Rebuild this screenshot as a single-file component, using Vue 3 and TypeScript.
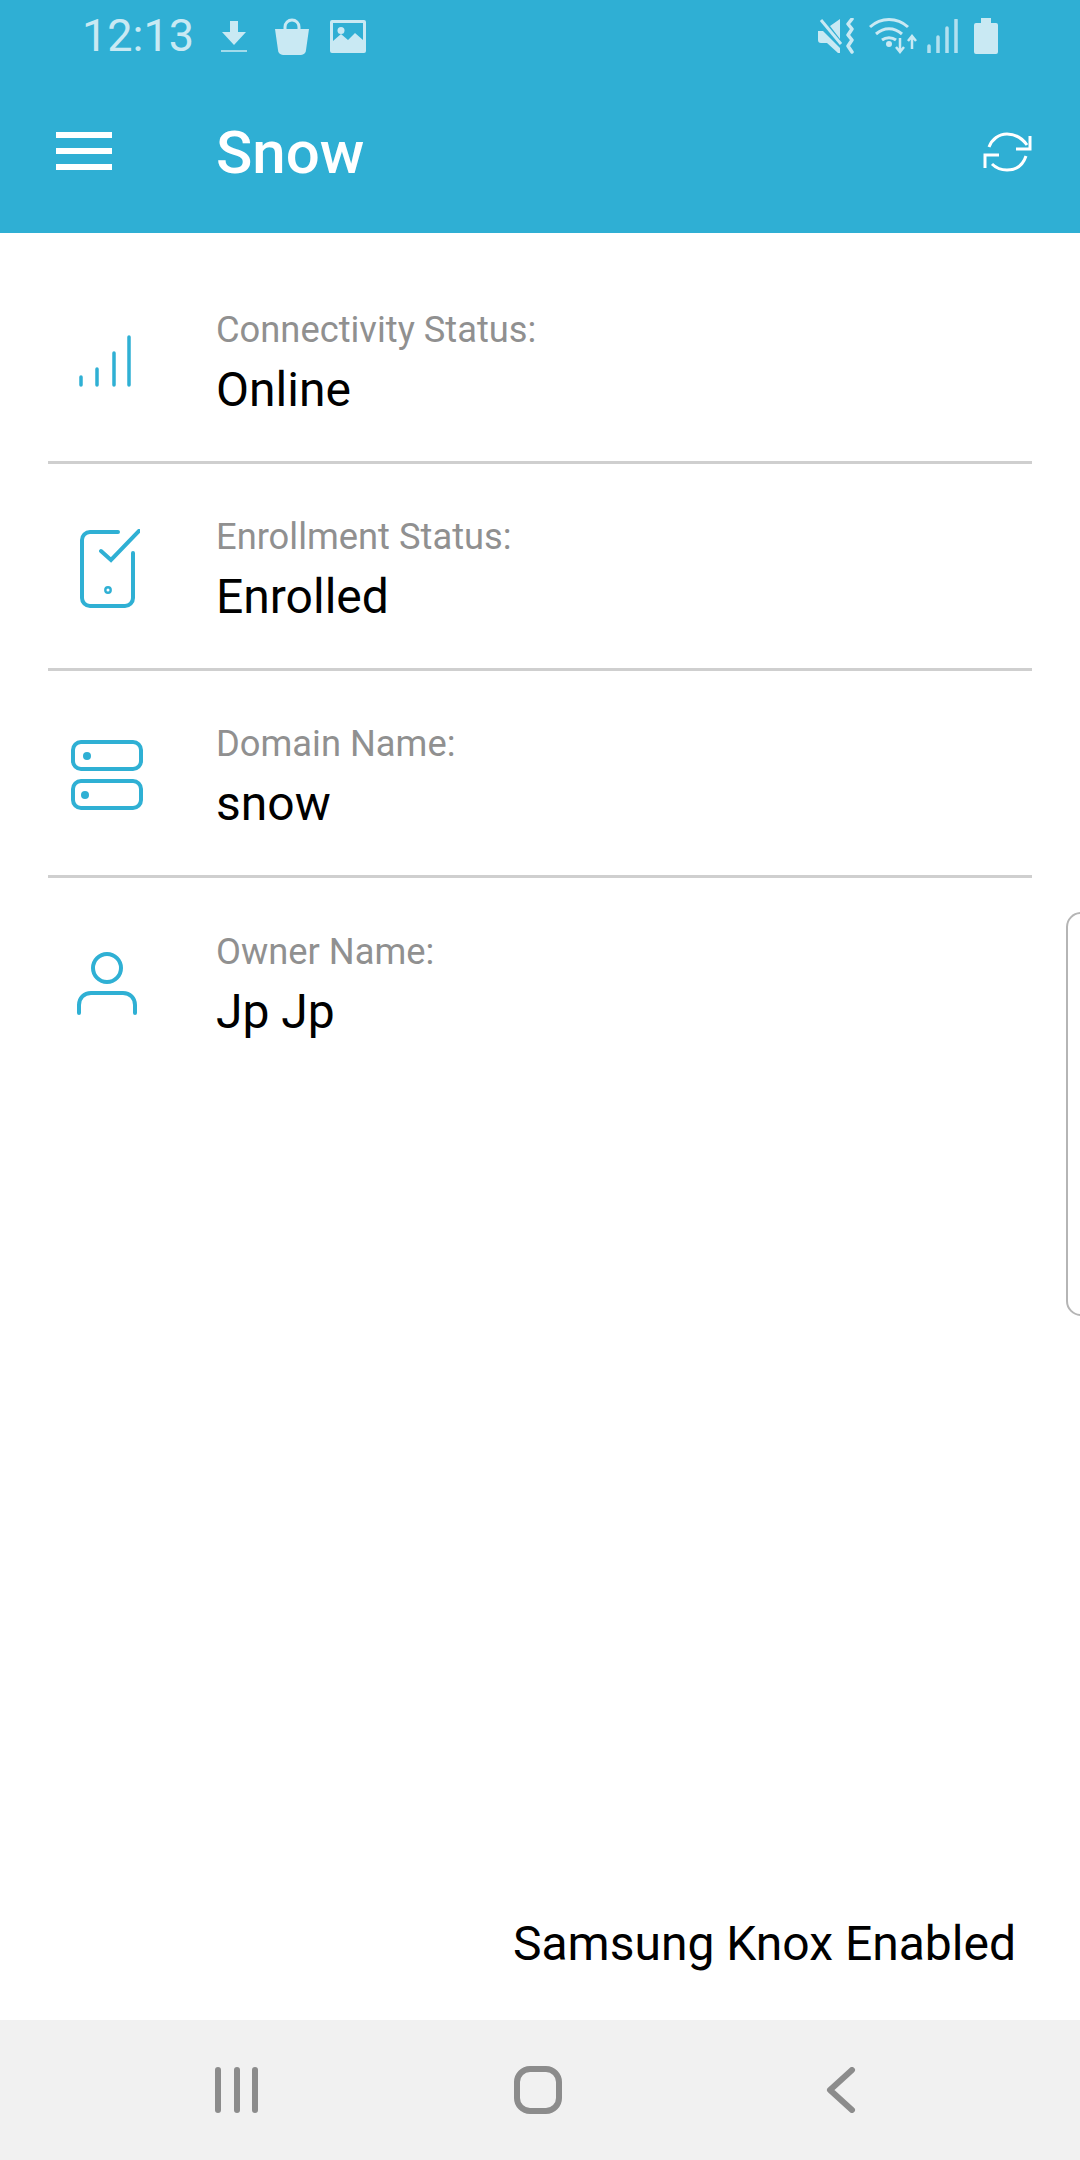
<script setup lang="ts">
interface StatusRow {
  icon: 'signal' | 'phone' | 'server' | 'person'
  label: string
  value: string
}

const rows: StatusRow[] = [
  { icon: 'signal', label: 'Connectivity Status:', value: 'Online' },
  { icon: 'phone', label: 'Enrollment Status:', value: 'Enrolled' },
  { icon: 'server', label: 'Domain Name:', value: 'snow' },
  { icon: 'person', label: 'Owner Name:', value: 'Jp Jp' }
]
</script>

<template>
  <div class="screen">
    <header class="top">
      <div class="status-bar">
        <div class="status-left">
          <span class="time">12:13</span>
          <svg class="ic-download" width="28" height="34" viewBox="0 0 28 34">
            <path d="M10 2h8v11h8L14 26 2 13h8z" fill="currentColor" />
            <rect x="1" y="31" width="26" height="2" fill="currentColor" opacity=".75" />
          </svg>
          <svg class="ic-bag" width="36" height="37" viewBox="0 0 36 37">
            <path d="M11 12V9a7 7 0 0 1 14 0v3" fill="none" stroke="currentColor" stroke-width="3" />
            <path d="M1 11h34l-3 21a5 5 0 0 1-5 5H9a5 5 0 0 1-5-5z" fill="currentColor" />
          </svg>
          <svg class="ic-image" width="36" height="33" viewBox="0 0 36 33">
            <path fill-rule="evenodd" d="M2 0h32a2 2 0 0 1 2 2v29a2 2 0 0 1-2 2H2a2 2 0 0 1-2-2V2a2 2 0 0 1 2-2zm1 3v18l8-7 7 6 7-7 8 7V3z" fill="currentColor" />
            <circle cx="11" cy="10.500" r="3.500" fill="currentColor" />
          </svg>
        </div>
        <div class="status-right">
          <svg class="ic-mute" width="38" height="36" viewBox="0 0 38 36">
            <path d="M0 13h5l17 17v5h-2L9 25H3a3 3 0 0 1-3-3zM12 8l10-7v20z" fill="currentColor" />
            <path d="M3 2l20 24" stroke="currentColor" stroke-width="3" />
            <path d="M34 1l-4 5 4 5-4 6 4 5-4 6 4 6" fill="none" stroke="currentColor" stroke-width="3.500" stroke-linecap="round" stroke-linejoin="round" />
          </svg>
          <svg class="ic-wifi" width="48" height="36" viewBox="0 0 48 36">
            <path d="M1 9C12-1 28-1 39 9M7 16c8-7 18-7 26 0M13 22c4-3 10-3 14 0" fill="none" stroke="currentColor" stroke-width="3" />
            <circle cx="20" cy="26" r="3" fill="currentColor" />
            <path d="M31 20v14M27 29l4 5 4-5M43 31V18M39 23l4-5 4 5" fill="none" stroke="currentColor" stroke-width="2.500" />
          </svg>
          <svg class="ic-cell" width="32" height="34" viewBox="0 0 32 34">
            <path d="M3 27v7M12 18v16M21 9v25M30 1v33" fill="none" stroke="currentColor" stroke-width="3.500" stroke-linecap="round" opacity=".85" />
          </svg>
          <svg class="ic-battery" width="24" height="36" viewBox="0 0 24 36">
            <path d="M7 0h10v5h5a2 2 0 0 1 2 2v27a2 2 0 0 1-2 2H2a2 2 0 0 1-2-2V7a2 2 0 0 1 2-2h5z" fill="currentColor" />
          </svg>
        </div>
      </div>
      <div class="app-bar">
        <div class="menu"><span></span><span></span><span></span></div>
        <h1 class="title">Snow</h1>
        <svg class="refresh" width="50" height="42" viewBox="0 0 50 42">
          <path d="M6 15C9 7 16 2 24 2c8 0 15 4 20 11M43 24c-3 9-10 14-19 14-6 0-11-2-15-6" fill="none" stroke="#fff" stroke-width="3" />
          <path d="M47 4v13H33M2 36V23h14" fill="none" stroke="#fff" stroke-width="3" />
        </svg>
      </div>
    </header>

    <main class="content">
      <div v-for="row in rows" :key="row.label" class="row">
        <div class="row-icon">
          <svg v-if="row.icon === 'signal'" class="ic-signal" width="54" height="52" viewBox="0 0 54 52">
            <path d="M4 42v8M20 34v16M37 18v32M52 2v48" fill="none" stroke="#2fb0d4" stroke-width="3.500" stroke-linecap="round" />
          </svg>
          <svg v-else-if="row.icon === 'phone'" class="ic-phone" width="60" height="79" viewBox="0 0 60 79">
            <path d="M38 3H10a8 8 0 0 0-8 8v58a8 8 0 0 0 8 8h35a8 8 0 0 0 8-8V24" fill="none" stroke="#2fb0d4" stroke-width="4" stroke-linecap="round" />
            <path d="M21 22l10 9 28-29" fill="none" stroke="#2fb0d4" stroke-width="4" stroke-linecap="round" />
            <circle cx="28" cy="61" r="2.700" fill="none" stroke="#2fb0d4" stroke-width="2.400" />
          </svg>
          <svg v-else-if="row.icon === 'server'" width="72" height="70" viewBox="0 0 72 70">
            <rect x="2" y="2" width="68" height="27" rx="8" fill="none" stroke="#2fb0d4" stroke-width="4" />
            <rect x="2" y="41" width="68" height="27" rx="8" fill="none" stroke="#2fb0d4" stroke-width="4" />
            <circle cx="16" cy="16" r="4" fill="#2fb0d4" />
            <circle cx="14" cy="55" r="4" fill="#2fb0d4" />
          </svg>
          <svg v-else width="62" height="64" viewBox="0 0 62 64">
            <circle cx="31" cy="16" r="14" fill="none" stroke="#2fb0d4" stroke-width="4" />
            <path d="M3 61v-8c0-7 5-12 12-12h32c7 0 12 5 12 12v8" fill="none" stroke="#2fb0d4" stroke-width="4" stroke-linecap="round" />
          </svg>
        </div>
        <div class="row-text">
          <div class="label">{{ row.label }}</div>
          <div class="value">{{ row.value }}</div>
        </div>
      </div>
    </main>

    <div class="knox">Samsung Knox Enabled</div>

    <nav class="nav-bar">
      <div class="recents"><span></span><span></span><span></span></div>
      <div class="home"></div>
      <svg class="back" width="30" height="46" viewBox="0 0 30 46">
        <path d="M26 3L4 23l22 20" fill="none" stroke="#8c8c8c" stroke-width="6" stroke-linecap="round" stroke-linejoin="round" />
      </svg>
    </nav>

    <div class="edge-handle"></div>
  </div>
</template>

<style>
body {
  margin: 0;
  background: #fff;
}
</style>

<style scoped>
.screen {
  position: relative;
  width: 1080px;
  height: 2160px;
  display: flex;
  flex-direction: column;
  overflow: hidden;
  background: #fff;
  font-family: Roboto, "Liberation Sans", sans-serif;
}

.top {
  height: 233px;
  background: #2fafd4;
  color: #fff;
  flex: none;
}

.status-bar {
  height: 72px;
  display: flex;
  justify-content: space-between;
  align-items: center;
  padding: 0 82px;
  color: #c9e9f3;
}

.status-left,
.status-right {
  display: flex;
  align-items: center;
}

.time {
  font-size: 45px;
  font-weight: 400;
  line-height: 72px;
  width: 138px;
}

.ic-bag {
  margin-left: 26px;
}

.ic-image {
  margin-left: 20px;
}

.ic-wifi {
  margin-left: 13px;
}

.ic-cell {
  margin-left: 9px;
}

.ic-battery {
  margin-left: 16px;
}

.app-bar {
  height: 161px;
  display: flex;
  align-items: center;
  padding: 0 47px 0 56px;
}

.menu {
  width: 56px;
  height: 38px;
  display: flex;
  flex-direction: column;
  justify-content: space-between;
  margin-top: -4px;
}

.menu span {
  height: 6px;
  background: #fff;
}

.title {
  margin: 0 0 0 104px;
  font-size: 60px;
  font-weight: 500;
  flex: 1;
}

.content {
  flex: 1;
  padding: 24px 48px 0;
}

.row {
  height: 207px;
  box-sizing: border-box;
  display: flex;
  align-items: center;
  padding-top: 8px;
  border-bottom: 3px solid #cfcfcf;
}

.row:last-child {
  border-bottom: none;
}

.row-icon {
  width: 168px;
  display: flex;
  justify-content: center;
  padding-right: 50px;
  margin-top: -4px;
  box-sizing: border-box;
}

.ic-signal {
  margin-left: -6px;
}

.ic-phone {
  margin-left: 6px;
}

.label {
  font-size: 36.300px;
  line-height: 46px;
  color: #909090;
}

.value {
  font-size: 48px;
  line-height: 60px;
  margin-top: 7px;
  color: #000;
}

.knox {
  flex: none;
  text-align: right;
  padding: 0 64px 0 0;
  font-size: 48px;
  line-height: 60px;
  margin-bottom: 46px;
  color: #000;
}

.nav-bar {
  flex: none;
  height: 140px;
  background: #f1f1f1;
  display: flex;
  align-items: center;
  padding-left: 215px;
}

.recents {
  width: 43px;
  height: 46px;
  display: flex;
  justify-content: space-between;
}

.recents span {
  width: 6px;
  border-radius: 3px;
  background: #8c8c8c;
}

.home {
  width: 48px;
  height: 48px;
  margin-left: 256px;
  box-sizing: border-box;
  border: 6px solid #8c8c8c;
  border-radius: 16px;
}

.back {
  margin-left: 264px;
}

.edge-handle {
  position: absolute;
  left: 1066px;
  top: 912px;
  width: 30px;
  height: 404px;
  box-sizing: border-box;
  border: 2px solid #b5b5b5;
  border-radius: 16px;
  background: #fff;
}
</style>
